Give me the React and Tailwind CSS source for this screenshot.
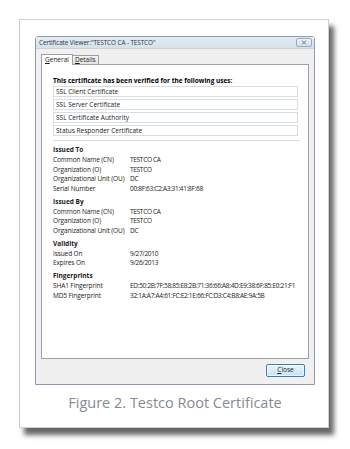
const uses = [
  "SSL Client Certificate",
  "SSL Server Certificate",
  "SSL Certificate Authority",
  "Status Responder Certificate",
];

const sections = [
  {
    title: "Issued To",
    rows: [
      ["Common Name (CN)", "TESTCO CA"],
      ["Organization (O)", "TESTCO"],
      ["Organizational Unit (OU)", "DC"],
      ["Serial Number", "00:8F:63:C2:A3:31:41:8F:68"],
    ],
  },
  {
    title: "Issued By",
    rows: [
      ["Common Name (CN)", "TESTCO CA"],
      ["Organization (O)", "TESTCO"],
      ["Organizational Unit (OU)", "DC"],
    ],
  },
  {
    title: "Validity",
    rows: [
      ["Issued On", "9/27/2010"],
      ["Expires On", "9/26/2013"],
    ],
  },
  {
    title: "Fingerprints",
    rows: [
      ["SHA1 Fingerprint", "ED:50:2B:7F:58:85:E8:2B:71:36:66:A8:4D:E9:38:6F:85:E0:21:F1"],
      ["MD5 Fingerprint", "32:1A:A7:A4:61:FC:E2:1E:66:FC:D3:C4:B8:AE:9A:5B"],
    ],
  },
];

const Section = ({ title, rows }) => {
  return (
    <div className="mt-[3px] first:mt-0">
      <div className="h-[9.75px] leading-[9.75px] font-bold">{title}</div>
      {rows.map(([label, value]) => (
        <div key={label} className="flex h-[9.75px] leading-[9.75px]">
          <span className="w-[77px] shrink-0 tracking-[-0.1px]">{label}</span>
          <span className="whitespace-nowrap tracking-[-0.3px]">{value}</span>
        </div>
      ))}
    </div>
  );
};

export default function App() {
  return (
    <div className="w-[350px] h-[449px] bg-white overflow-hidden pt-[19px] pl-[19px] font-['Open_Sans',sans-serif]">
      {/* figure card */}
      <div className="w-[310px] h-[409px] bg-white border border-[#cfcfcf] shadow-[5px_7px_5px_rgba(0,0,0,0.6)] pt-[16px] pl-[15px] flex flex-col">
        {/* dialog */}
        <div className="w-[280px] h-[349px] border border-[#8c9cae] rounded-t-[3px] bg-[#f0f0f0] flex flex-col text-[6.5px] text-[#1a1a1a]">
          <div className="h-[12px] flex items-center justify-between pl-[3px] pr-[2px] bg-gradient-to-b from-[#e4ecf4] to-[#d6e1ec] border-b border-[#c5d2df]">
            <span className="text-[6.4px] tracking-[-0.1px] text-[#333]">Certificate Viewer:"TESTCO CA - TESTCO"</span>
            <div className="w-[16px] h-[9px] rounded-[2px] border border-[#9aabbc] bg-gradient-to-b from-[#eef2f6] to-[#d5dee8] flex items-center justify-center">
              <svg width="6" height="5" viewBox="0 0 6 5">
                <path d="M0.8 0.6 L5.2 4.4 M5.2 0.6 L0.8 4.4" stroke="#6a7684" strokeWidth="0.9" />
              </svg>
            </div>
          </div>

          {/* tabs */}
          <div className="flex items-end pl-[5px] mt-[4px] h-[11px]">
            <div className="h-[11px] px-[3px] bg-white border border-b-0 border-[#a0a0a0] flex items-center relative z-10 -mb-px">
              <span><span className="underline">G</span>eneral</span>
            </div>
            <div className="h-[9px] px-[2px] bg-gradient-to-b from-[#f5f5f5] to-[#e3e3e3] border border-b-0 border-l-0 border-[#a0a0a0] flex items-center">
              <span><span className="underline">D</span>etails</span>
            </div>
          </div>

          {/* panel */}
          <div className="mx-[5px] h-[295px] bg-white border border-[#a0a0a0] pl-[11px] pr-[10px] pt-[11px]">
            <div className="font-bold leading-[9px] text-black">This certificate has been verified for the following uses:</div>
            <div className="flex flex-col gap-[2px] mt-[1px]">
              {uses.map((u) => (
                <div key={u} className="h-[11px] border border-[#d6dde3] px-[2px] flex items-center">
                  {u}
                </div>
              ))}
            </div>
            <div className="h-px bg-[#d9d9d9] mt-[4px] mb-[4px] mr-[-2px]" />
            {sections.map((s) => (
              <Section key={s.title} title={s.title} rows={s.rows} />
            ))}
          </div>

          {/* buttons */}
          <div className="flex justify-end pr-[9px] mt-[5px]">
            <button className="w-[39px] h-[13px] rounded-[2px] border border-[#3c7fb1] bg-gradient-to-b from-[#eaf6fd] to-[#c4e2f5] text-[6.5px] leading-none text-[#222] shadow-[inset_0_0_0_1px_rgba(255,255,255,0.6)]">
              <span className="underline">C</span>lose
            </button>
          </div>
        </div>

        {/* caption */}
        <div className="mt-[8px] w-[280px] text-center text-[14.5px] leading-[20px] text-[#868b91]">
          Figure 2. Testco Root Certificate
        </div>
      </div>
    </div>
  );
}
